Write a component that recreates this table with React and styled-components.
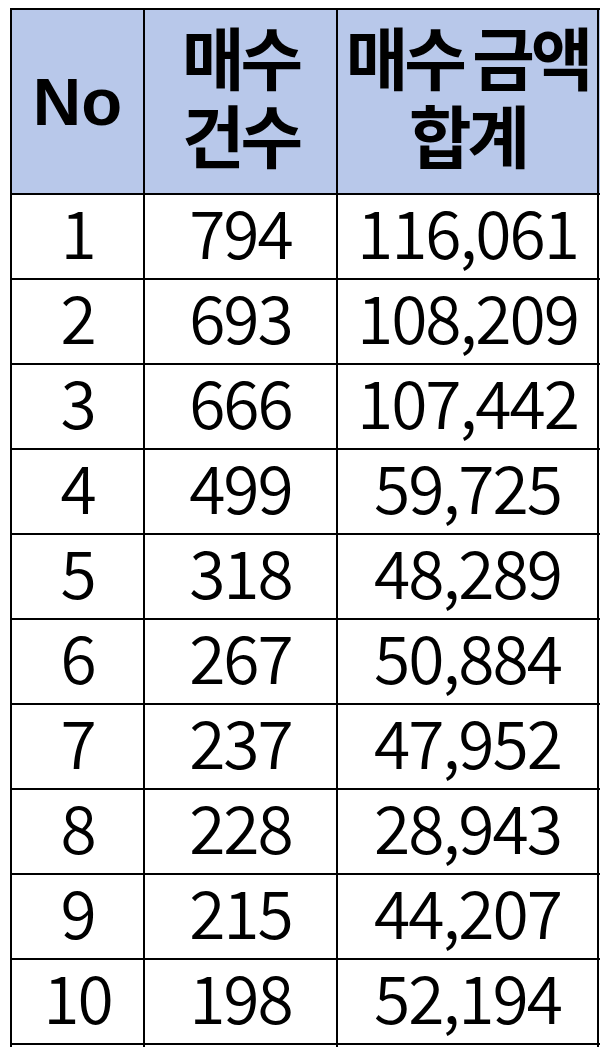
import React from "react";
import styled, { createGlobalStyle } from "styled-components";

const rows = [
  [1, "794", "116,061"],
  [2, "693", "108,209"],
  [3, "666", "107,442"],
  [4, "499", "59,725"],
  [5, "318", "48,289"],
  [6, "267", "50,884"],
  [7, "237", "47,952"],
  [8, "228", "28,943"],
  [9, "215", "44,207"],
  [10, "198", "52,194"],
  ["", "", ""],
];

const GlobalStyle = createGlobalStyle`
  html, body {
    margin: 0;
    padding: 0;
    background: #fff;
    overflow: hidden;
  }
`;

const Page = styled.div`
  width: 600px;
  height: 1047px;
  overflow: hidden;
  padding: 8px 0 0 10px;
  box-sizing: border-box;
`;

const Table = styled.table`
  border-collapse: collapse;
  table-layout: fixed;
  width: 700px;
  font-family: "Noto Sans CJK KR", "Noto Sans", sans-serif;
  color: #000;
`;

const HeadCell = styled.th`
  height: ${(p) => (p.$latin ? "183px" : "169px")};
  padding: 0 0 ${(p) => (p.$latin ? "0" : "14px")};
  border: 2px solid #000;
  background: #b8c8ea;
  text-align: center;
  vertical-align: middle;
  font-weight: 700;
  font-size: ${(p) => (p.$latin ? "67px" : "68px")};
  font-family: ${(p) =>
    p.$latin
      ? `"Liberation Sans", Arial, sans-serif`
      : `"Noto Sans CJK KR", "Noto Sans", sans-serif`};
  line-height: 78px;
  letter-spacing: ${(p) => (p.$latin ? "0" : "-4px")};
  word-spacing: -2px;
  white-space: nowrap;
`;

const Cell = styled.td`
  height: 69px;
  padding: 0 0 14px;
  border: 2px solid #000;
  text-align: center;
  vertical-align: middle;
  font-size: 66px;
  font-weight: 350;
  line-height: 60px;
  letter-spacing: -2px;
  white-space: nowrap;
`;

export default function App() {
  return (
    <>
      <GlobalStyle />
      <Page>
        <Table>
          <colgroup>
            <col style={{ width: 133 }} />
            <col style={{ width: 193 }} />
            <col style={{ width: 261 }} />
            <col style={{ width: 113 }} />
          </colgroup>
          <thead>
            <tr>
              <HeadCell $latin>No</HeadCell>
              <HeadCell>
                매수
                <br />
                건수
              </HeadCell>
              <HeadCell>
                매수 금액
                <br />
                합계
              </HeadCell>
              <HeadCell />
            </tr>
          </thead>
          <tbody>
            {rows.map((r, i) => (
              <tr key={i}>
                <Cell>{r[0]}</Cell>
                <Cell>{r[1]}</Cell>
                <Cell>{r[2]}</Cell>
                <Cell />
              </tr>
            ))}
          </tbody>
        </Table>
      </Page>
    </>
  );
}
